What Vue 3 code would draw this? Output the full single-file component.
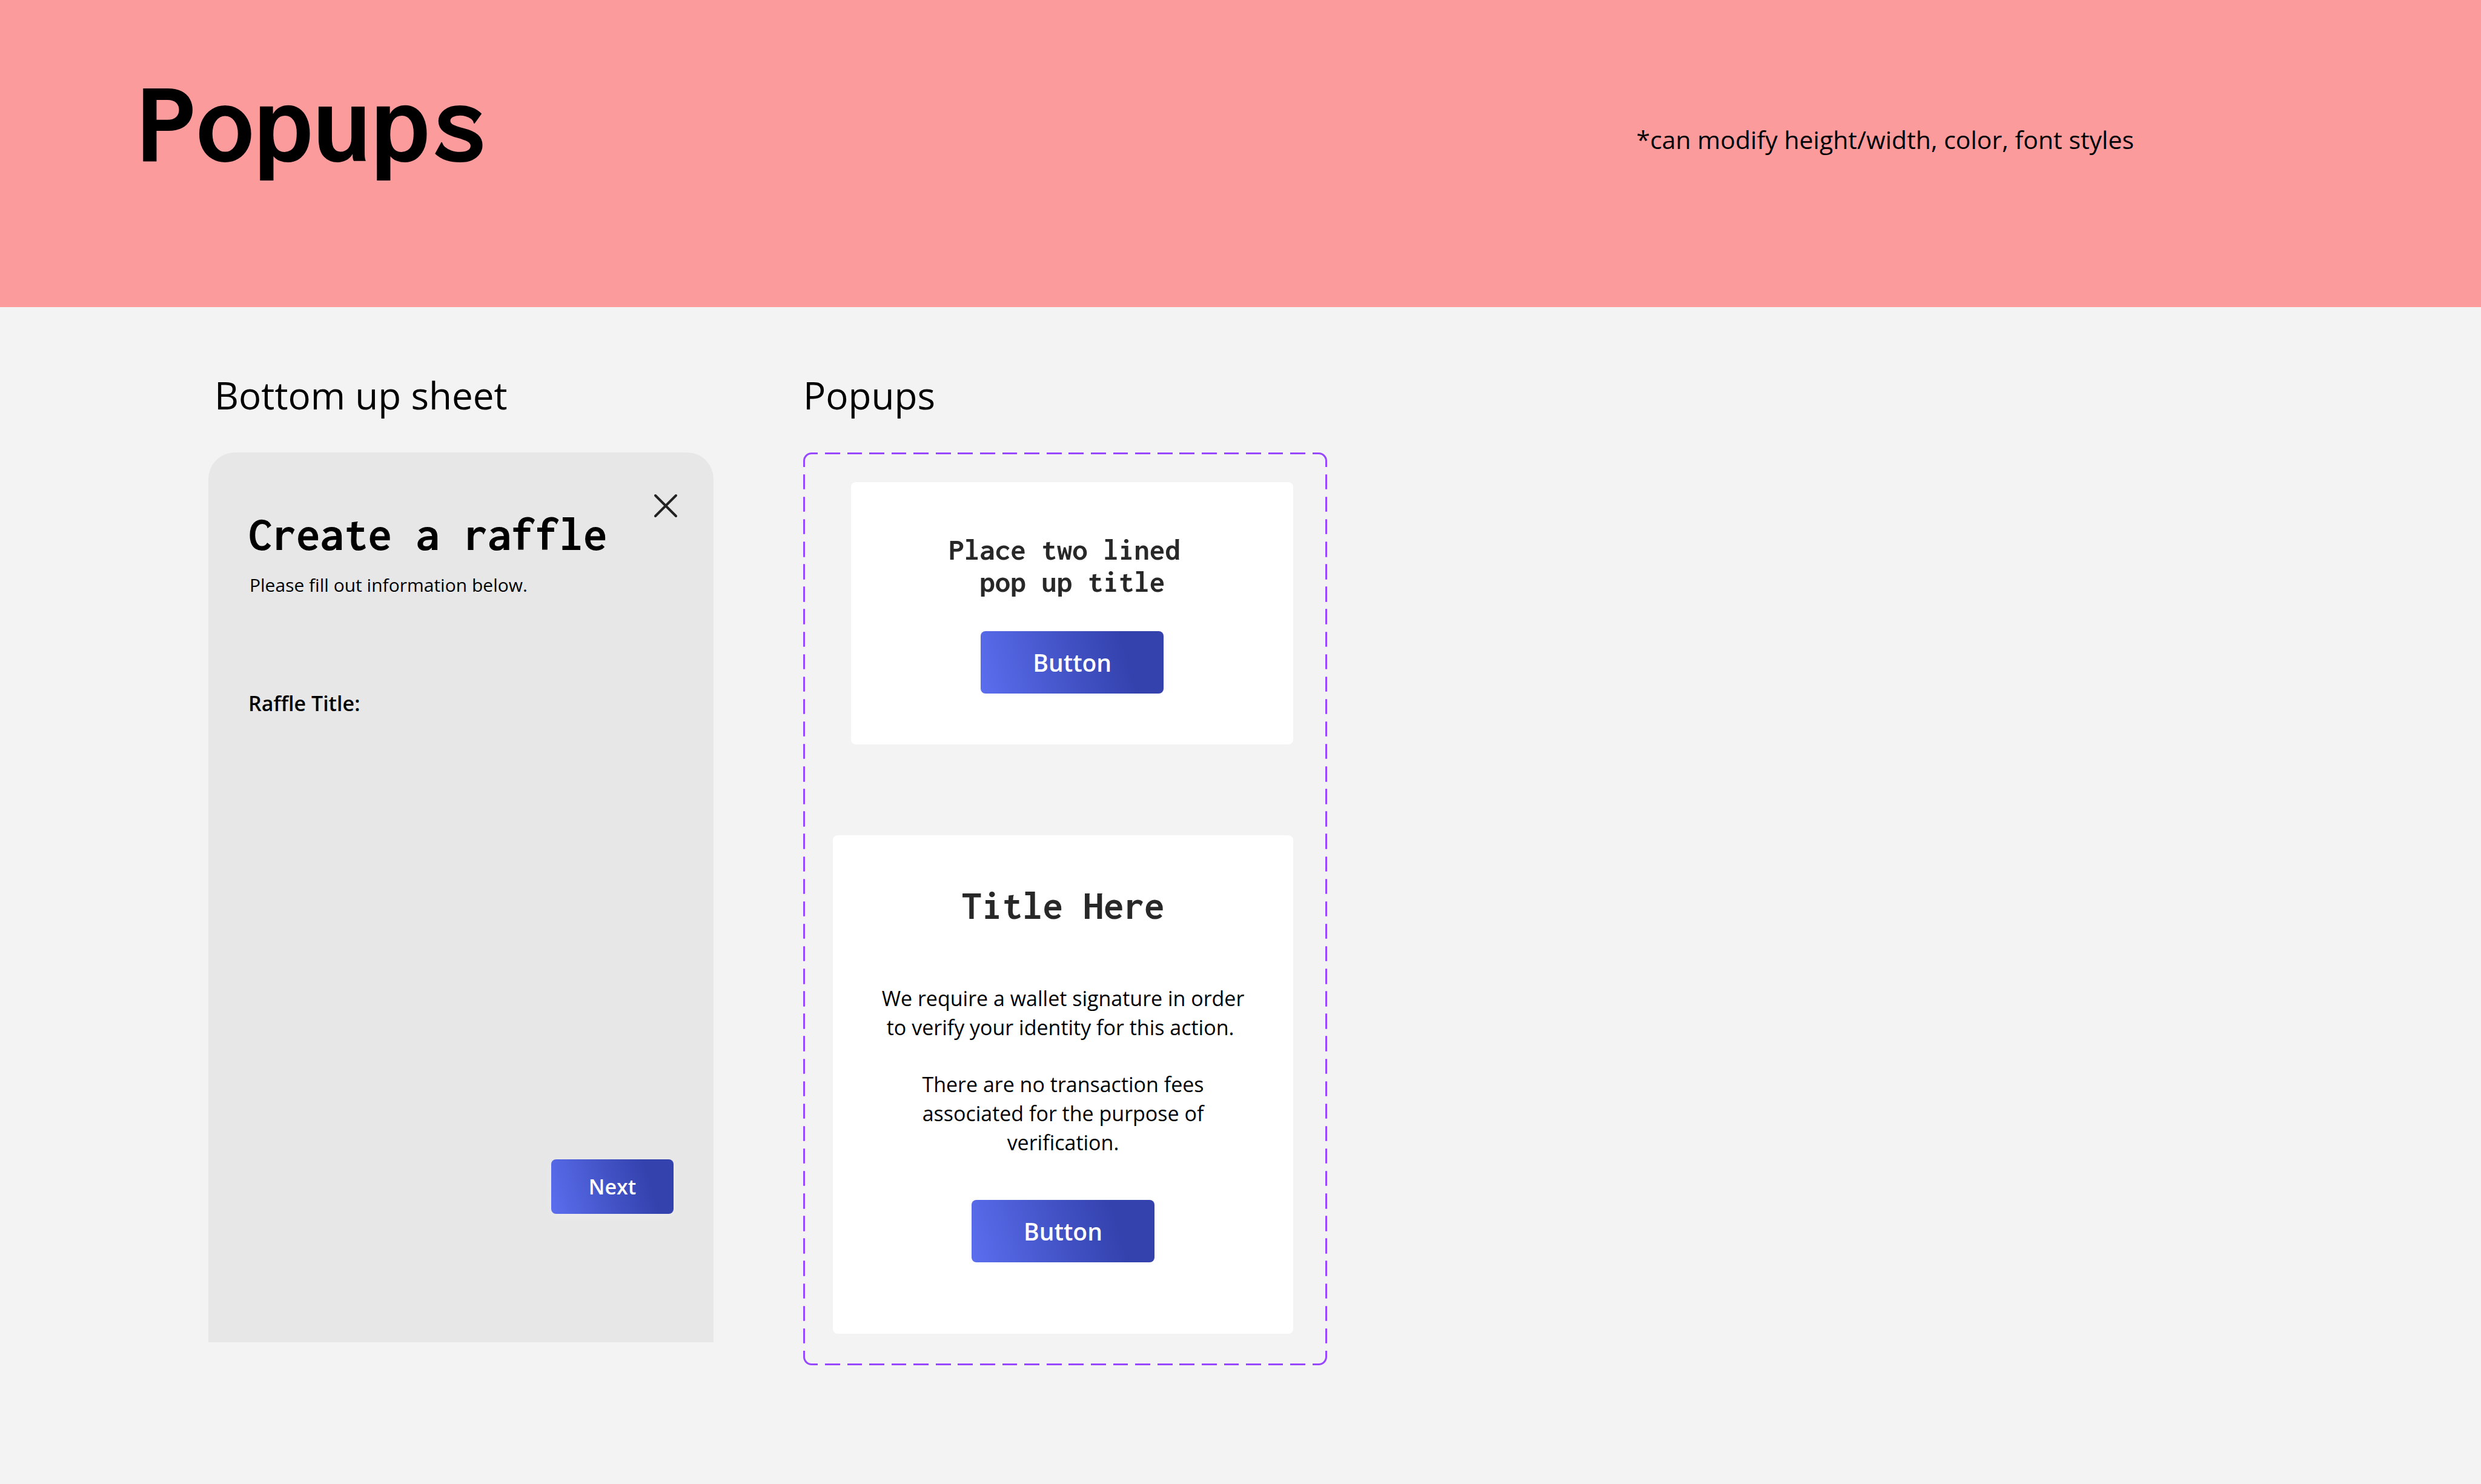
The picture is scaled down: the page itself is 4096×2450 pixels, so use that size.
<script setup>
const titleFirstLine = 'Place two lined\u00a0'
</script>

<template>
  <div class="page">
    <header class="banner">
      <h1 class="banner-title">Popups</h1>
      <p class="banner-note">*can modify height/width, color, font styles</p>
    </header>

    <main class="board">
      <section class="group">
        <h2 class="group-label group-label-inset">Bottom up sheet</h2>
        <form class="sheet" @submit.prevent>
          <div class="sheet-head">
            <h3 class="sheet-title">Create a raffle</h3>
            <button class="close" type="button" aria-label="Close">
              <svg viewBox="0 0 48 48" aria-hidden="true">
                <path d="M7 7 41 41M41 7 7 41" />
              </svg>
            </button>
          </div>
          <p class="sheet-hint">Please fill out information below.</p>
          <p class="sheet-field">Raffle Title:</p>
          <button class="button button-small" type="submit">Next</button>
        </form>
      </section>

      <section class="group">
        <h2 class="group-label">Popups</h2>
        <div class="frame">
          <article class="popup popup-short">
            <h3 class="popup-title">{{ titleFirstLine }}<br />pop up title</h3>
            <button class="button" type="button">Button</button>
          </article>
          <article class="popup popup-long">
            <h3 class="popup-title popup-title-large">Title Here</h3>
            <div class="popup-text">
              <p>We require a wallet signature in order<br />to verify your identity for this action.&nbsp;</p>
              <p>There are no transaction fees<br />associated for the purpose of<br />verification.</p>
            </div>
            <button class="button" type="button">Button</button>
          </article>
        </div>
      </section>
    </main>
  </div>
</template>

<style>
body {
  margin: 0;
  background: #f3f3f3;
}
</style>

<style scoped>
.page {
  min-height: 100vh;
  background: #f3f3f3;
  color: #000;
  font-family: "Open Sans", "Noto Sans", sans-serif;
}

h1, h2, h3, p {
  margin: 0;
  font-weight: 400;
}

.banner {
  display: flex;
  justify-content: space-between;
  align-items: flex-start;
  padding: 102px 573px 205px 227px;
  background: #fc9b9b;
}

.banner-title {
  font: 700 193px/200px "Inconsolata", "Noto Sans Mono CJK JP", monospace;
}

.banner-note {
  padding-top: 100px;
  font-size: 41px;
  line-height: 56px;
}

.board {
  display: grid;
  grid-template-columns: 834fr 865fr 1757fr;
  column-gap: 148px;
  align-items: start;
  padding: 103px 0 0 344px;
}

.group-label {
  margin-bottom: 53px;
  font-size: 62px;
  line-height: 84px;
}

.group-label-inset {
  padding-left: 10px;
}

.sheet {
  display: flex;
  flex-direction: column;
  padding: 64px 66px 212px;
  border-radius: 44px 44px 0 0;
  background: #e7e7e7;
}

.sheet-head {
  display: flex;
  justify-content: space-between;
  align-items: flex-start;
}

.sheet-title {
  padding-top: 31px;
  font: 700 79px/80px "Inconsolata", "Noto Sans Mono CJK JP", monospace;
}

.close {
  width: 48px;
  height: 48px;
  margin-right: -11px;
  padding: 0;
  border: 0;
  background: none;
}

.close svg {
  display: block;
  width: 100%;
  height: 100%;
  fill: none;
  stroke: #222;
  stroke-width: 4;
  stroke-linecap: round;
}

.sheet-hint {
  margin-top: 24px;
  padding-left: 2px;
  font-size: 30px;
  line-height: 40px;
}

.sheet-field {
  margin-top: 151px;
  font-size: 34px;
  font-weight: 600;
  line-height: 48px;
}

.button {
  width: 302px;
  height: 103px;
  padding: 0;
  border: 0;
  border-radius: 8px;
  background: linear-gradient(74deg, #5b6eee, #3342ad 78%);
  color: #fff;
  font: 600 39px/56px "Open Sans", "Noto Sans", sans-serif;
}

.button-small {
  align-self: flex-end;
  width: 202px;
  height: 90px;
  margin-top: 729px;
  box-shadow: 0 4px 16px rgba(255, 255, 255, 0.25);
  font-size: 34px;
  line-height: 48px;
}

.frame {
  display: flex;
  flex-direction: column;
  align-items: flex-end;
  gap: 150px;
  box-sizing: border-box;
  padding: 49px 56px 52px 49px;
  /* Corner and edge tiles of the dashed outline; "round" keeps whole dashes on every side. */
  border-image: url("data:image/svg+xml,%3Csvg xmlns='http://www.w3.org/2000/svg' width='97' height='97' fill='none' stroke='%239747ff' stroke-width='3'%3E%3Cpath d='M1.500 24V14A12.500 12.500 0 0 1 14 1.500H24M73 1.500H83A12.500 12.500 0 0 1 95.500 14V24M95.500 73V83A12.500 12.500 0 0 1 83 95.500H73M24 95.500H14A12.500 12.500 0 0 1 1.500 83V73M36 1.500H61M36 95.500H61M1.500 36V61M95.500 36V61'/%3E%3C/svg%3E") 30 / 30px round;
  border-style: solid;
  border-width: 0;
}

.popup {
  display: flex;
  flex-direction: column;
  align-items: center;
  box-sizing: border-box;
  border-radius: 8px;
  background: #fff;
  text-align: center;
}

.popup-short {
  width: 96%;
  padding: 85px 0 84px;
}

.popup-long {
  width: 100%;
  padding: 80px 0 118px;
}

.popup-title {
  margin-bottom: 55px;
  color: #282828;
  font: 700 51px/53px "Inconsolata", "Noto Sans Mono CJK JP", monospace;
}

.popup-title-large {
  margin-bottom: 93px;
  font-size: 67px;
  line-height: 72px;
}

.popup-text {
  display: flex;
  flex-direction: column;
  gap: 46px;
  margin-bottom: 71px;
  font-size: 34px;
  line-height: 48px;
}
</style>
